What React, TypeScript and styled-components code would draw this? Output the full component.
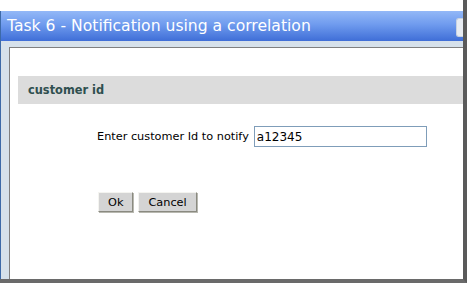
import React, { useState } from "react";
import styled, { createGlobalStyle } from "styled-components";

const GlobalStyle = createGlobalStyle`
    html, body {
        margin: 0;
        padding: 0;
        background: #ffffff;
    }
    body {
        font-family: Tahoma, "DejaVu Sans", Verdana, sans-serif;
    }
`

const App = () => {
    const [customerId, setCustomerId] = useState("a12345");

    return (
        <>
            <GlobalStyle />
            <Screen>
                <Window>
                    <TitleBar>
                        <Title>Task 6 - Notification using a correlation</Title>
                        <TitleButton />
                    </TitleBar>
                    <Frame>
                        <Content>
                            <Section>
                                <SectionTitle>customer id</SectionTitle>
                            </Section>
                            <FieldRow>
                                <Label htmlFor="cid">Enter customer Id to notify</Label>
                                <Input id="cid" value={customerId} onChange={(e) => setCustomerId(e.target.value)} />
                            </FieldRow>
                            <Buttons>
                                <Button>Ok</Button>
                                <Button>Cancel</Button>
                            </Buttons>
                        </Content>
                    </Frame>
                </Window>
            </Screen>
        </>
    )
}

export default App;

const Screen = styled.div`
    width: 467px;
    height: 283px;
    box-sizing: border-box;
    padding-top: 11px;
    background: #ffffff;
    border-right: 4px solid #5a5a5a;
    border-bottom: 4px solid #6a6a6a;
    overflow: hidden;
    display: flex;
`

const Window = styled.div`
    flex: 1;
    display: flex;
    flex-direction: column;
    border-left: 1px solid #3d6aa8;
    background: #d6e1eb;
`

const TitleBar = styled.div`
    height: 30px;
    display: flex;
    align-items: center;
    justify-content: space-between;
    padding-left: 6px;
    background: linear-gradient(to bottom, #93b8f7 0%, #6f9bee 45%, #3f6ed7 100%);
`

const Title = styled.div`
    color: #ffffff;
    font-family: "DejaVu Sans", Verdana, sans-serif;
    font-size: 15.6px;
    white-space: nowrap;
`

const TitleButton = styled.div`
    width: 6px;
    height: 17px;
    margin-top: 2px;
    border: 1px solid #c8d2e0;
    border-right: none;
    border-radius: 3px 0 0 3px;
    background: #e8ecf2;
`

const Frame = styled.div`
    flex: 1;
    display: flex;
    padding: 6px 0 0 8px;
`

const Content = styled.div`
    flex: 1;
    background: #ffffff;
    border-top: 1px solid #808080;
    border-left: 1px solid #808080;
    padding-top: 28px;
    padding-left: 8px;
`

const Section = styled.div`
    height: 28px;
    display: flex;
    align-items: center;
    padding-left: 10px;
    background: #dcdcdc;
`

const SectionTitle = styled.div`
    color: #2f4f4f;
    font-family: "DejaVu Sans", Verdana, sans-serif;
    font-weight: bold;
    font-size: 11.4px;
`

const FieldRow = styled.div`
    display: flex;
    align-items: center;
    gap: 5px;
    margin-top: 22px;
    padding-left: 79px;
`

const Label = styled.label`
    font-family: "DejaVu Sans", Verdana, sans-serif;
    font-size: 11.3px;
    color: #000000;
`

const Input = styled.input`
    width: 173px;
    height: 21px;
    box-sizing: border-box;
    border: 1px solid #7f9db9;
    padding: 1px 2px;
    font-family: "DejaVu Sans", Verdana, sans-serif;
    font-size: 12px;
    color: #000000;
    outline: none;
`

const Buttons = styled.div`
    display: flex;
    gap: 5px;
    margin-top: 45px;
    padding-left: 80px;
`

const Button = styled.button`
    height: 20px;
    padding: 0 9px;
    font-family: "DejaVu Sans", Verdana, sans-serif;
    font-size: 11.3px;
    color: #000000;
    background: #d4d4d4;
    border: 1px solid;
    border-color: #f4f4f0 #8a8a80 #8a8a80 #f4f4f0;
    box-shadow: 1px 1px 0 #b8b8b0;
`
